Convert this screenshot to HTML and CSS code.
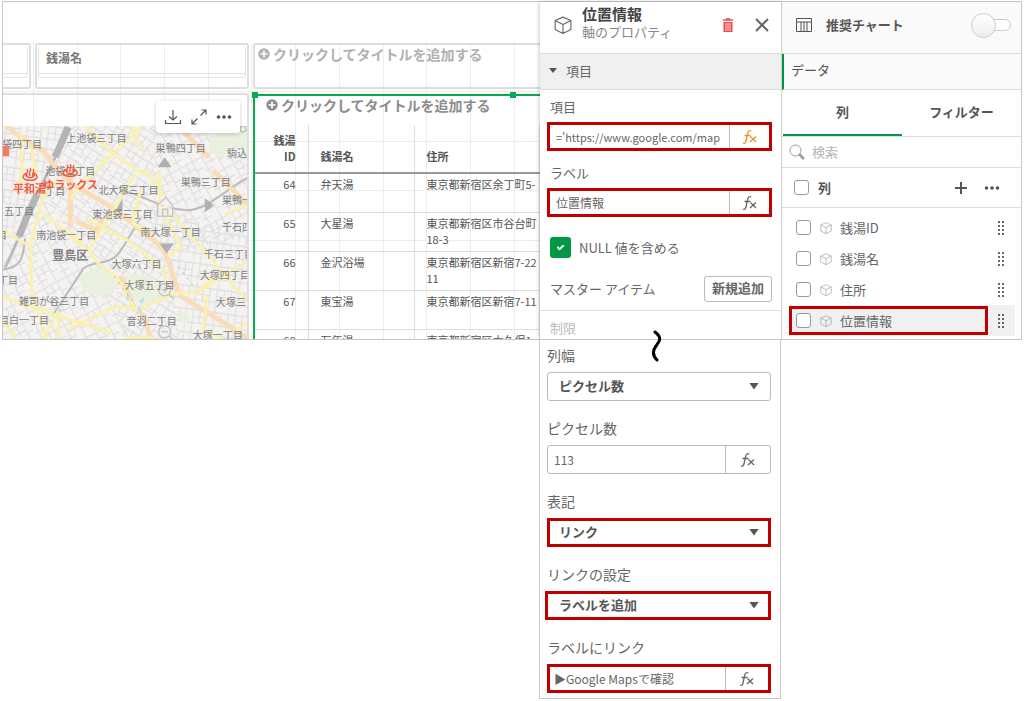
FILE: index.html
```html
<!DOCTYPE html>
<html lang="ja">
<head>
<meta charset="utf-8">
<meta name="viewport" content="width=device-width, initial-scale=1">
<title>位置情報 - 軸のプロパティ</title>
<link rel="stylesheet" href="styles.css">
</head>
<body>
<svg class="defs" aria-hidden="true">
  <symbol id="cube" viewBox="0 0 16 16"><path d="M8 1 15 4v8l-7 3.500L1 12V4zM1 4l7 3.500L15 4M8 7.500v8" fill="none" stroke="currentColor" stroke-linejoin="round"/></symbol>
  <symbol id="plus-disc" viewBox="0 0 12 12"><circle cx="6" cy="6" r="5.700" fill="currentColor"/><path d="M6 2.500v7M2.500 6h7" stroke="#fff" stroke-width="1.700"/></symbol>
  <symbol id="fx" viewBox="0 0 18 18"><path d="M2 15c2 1 2.700-.5 3.200-3L6.600 5.500C7.100 3 8.300 2 10.300 3M3.500 7.500h6M9.500 8.500l5.500 5.500M15 8.500l-6 5.500" fill="none" stroke="currentColor" stroke-width="1.300"/></symbol>
  <symbol id="grip" viewBox="0 0 8 16"><path d="M2 1v14M6 1v14" stroke="currentColor" stroke-width="2" stroke-dasharray="2 2"/></symbol>
  <symbol id="dots" viewBox="0 0 16 6"><g fill="currentColor"><circle cx="2.500" cy="3" r="1.800"/><circle cx="8" cy="3" r="1.800"/><circle cx="13.500" cy="3" r="1.800"/></g></symbol>
  <symbol id="onsen" viewBox="0 0 16 14"><path d="M4 6C2 12 14 12 12 6c6 4 2 7-4 7S-2 10 4 6M5 9C3 6 7 5 5 2M8 9c-2-4 2-5 0-8M11 9c-2-3 2-4 0-7" fill="none" stroke="#f4583c" stroke-width="1.400"/></symbol>
</svg>

<main class="frame">
  <section class="canvas" aria-label="シート">
    <svg class="gridlines" aria-hidden="true" width="537" height="337"><path d="M30.500 40v300M74.500 40v300M117.500 40v300M161.500 40v300M205.500 40v300M248.500 40v300M292.500 40v300M336.500 40v300M380.500 40v300M423.500 40v300M467.500 40v300M511.500 40v300M0 89.500h537M0 139.500h537M0 188.500h537M0 238.500h537M0 288.500h537" stroke="#ededed"/></svg>
    <div class="card card-edge"><div class="filter"></div></div>
    <div class="card"><div class="filter">銭湯名</div></div>
    <div class="card card-open"><button class="title-add" type="button"><svg class="i12"><use href="#plus-disc"/></svg>クリックしてタイトルを追加する</button></div>
    <div class="card map-card">
      <div class="toolbar">
        <button type="button" aria-label="ダウンロード"><svg class="i18" viewBox="0 0 18 18"><path d="M9 2v10M5 8.500 9 12l4-3.500M1.500 12v3.500h15V12" fill="none" stroke="currentColor" stroke-width="1.200"/></svg></button>
        <button type="button" aria-label="全画面"><svg class="i18" viewBox="0 0 18 18"><path d="M10.500 7.500 16 2M11.500 2H16v4.500M7.500 10.500 2 16M2 11.500V16h4.500" fill="none" stroke="currentColor" stroke-width="1.200"/></svg></button>
        <button type="button" aria-label="その他"><svg class="i16x6"><use href="#dots"/></svg></button>
      </div>
      <svg class="map" viewBox="3 126 243 213" preserveAspectRatio="xMinYMin slice" role="img" aria-label="豊島区の地図">
        <defs>
          <pattern id="s1" width="23" height="19" patternUnits="userSpaceOnUse" patternTransform="rotate(32)"><path d="M0 2h23M5 2v17M12 0v11M19 2v17M5 8h7M0 14h19M12 11h11" stroke="#dcdcdc" fill="none"/></pattern>
          <pattern id="s2" width="25" height="21" patternUnits="userSpaceOnUse" patternTransform="rotate(-28)"><path d="M0 2h25M4 2v19M11 2v10M18 0v21M4 9h14M0 16h11M18 12h7" stroke="#dcdcdc" fill="none"/></pattern>
          <pattern id="s3" width="21" height="23" patternUnits="userSpaceOnUse" patternTransform="rotate(8)"><path d="M0 3h21M3 0v23M10 3v13M17 3v20M3 10h14M0 16h21" stroke="#dcdcdc" fill="none"/></pattern>
        </defs>
        <path fill="#f4f3f2" d="M3 126h243v213H3z"/>
        <path fill="url(#s3)" d="M3 126h65L38 185 3 250z"/>
        <path fill="url(#s1)" d="M68 126h90l-10 80-60 45-50-60z"/>
        <path fill="url(#s2)" d="M158 126h88v110l-70 15-28-45z"/>
        <path fill="url(#s3)" d="M148 206l98 30v103h-65z"/>
        <path fill="url(#s2)" d="M3 250l35-59 50 60 40 80v8H3z"/>
        <path fill="url(#s1)" d="M88 251l60-45 33 133h-53z"/>
        <g fill="#e9f0de">
          <path d="M210 136l24-8 12 2v20l-18-4-6 14-14-10zM78 276l16-8 18 5 5 14-14 8-20-4zM120 277l21-4 16 8 9 14-25 8-16-8zM98 159l8-4 4 8-8 3zM46 308l8 1v7h-9zM180 310l10 5-5 8-10-4z"/>
        </g>
        <path d="M68 127l-13 30M37 194c-9 18-14 31-18 42" fill="none" stroke="#b4b4b4" stroke-width="7"/>
        <path d="M55 157l-18 37M19 236c-4 10-8 19-14 31" fill="none" stroke="#bbb" stroke-width="3"/>
        <path d="M3 269c17-2 20-9 22-31M53 314l30-46c11-9 24-2 35-15 7-10 14-22 22-36M120 190c26 5 36 18 67 20 22-2 36-20 59-32" fill="none" stroke="#bbb" stroke-width="2"/>
        <g fill="none" stroke="#fbdcb8" stroke-width="5"><path d="M3 122c20 22 42 24 48 40 10 8 12 18 26 25l38 22 38 31c20 14 15 37 28 56l42 26 26 17M212 170l34 34M70 170v57M76 221l20 9 6-13M120 275l13 31 11 10 6 23M177 126l31 31"/></g>
        <g fill="none" stroke="#faf1ae" stroke-width="3">
          <path d="M85 126l31 31 29 18M142 126l-40 38-33 35M131 126l9 24M21 133l1 44-5 6M31 147l5 28M3 230l27 16 12-47 14-19M31 246c-1 35 0 50 7 64l8 29M3 296l54 19 55 17M72 232l28 33 16 11 17 30M88 251l35-58 12-19M88 219l43 23 32 27M164 269l3 28M134 310l42-18h20l50-31M159 171v36l22 40-14 9M140 189l-8 34 22 12M164 205l43 50 39 45M195 293l17-16M43 339l15-29 1 29M67 329l47-23 24 2M205 293v20l-3 16 20 10M145 170l18 25M42 212l40 33M224 214l22-9M235 330l11-8M3 320l14 18M125 337h29"/>
        </g>
        <path d="M128 294l-1 6M143 298l-3 4M138 306l2 5M58 308l3 2" stroke="#b9e3f1" stroke-width="3"/>
        <path d="M114 276l18 25M178 266l15 20" stroke="#bbb" stroke-dasharray="2 5"/>
        <g fill="#b0b0b0"><path d="M164 157l7 10h-14zM115 211l7-13v13zM204 198l9 7-9 7zM159 243h14l-7 10z"/></g>
        <g fill="#f3f2f1" fill-opacity=".6" stroke="#c6c6c6" stroke-width="1.500"><circle cx="164" cy="289" r="6"/><path d="M161 289h6M164 286v6M168 294l5 4"/><circle cx="164" cy="331" r="6"/><path d="M161 331h6M168 335l5 4"/><path d="M157 205l8-8 7 8v11h-15zM162 216v-7h5v7"/><circle cx="242" cy="129" r="3"/></g>
        <g class="places">
          <text x="2" y="148">袋四丁目</text><text x="66" y="142">上池袋三丁目</text><text x="155" y="152">巣鴨四丁目</text><text x="226" y="157">駒込</text>
          <text x="45" y="175">池袋二丁目</text><text x="98" y="194">北大塚三丁目</text><text x="180" y="186">巣鴨三丁目</text><text x="221" y="204">巣鴨一</text>
          <text x="45" y="195">丁目</text><text x="4" y="215">五丁目</text><text x="92" y="218">東池袋三丁目</text><text x="221" y="231">千石四</text><text x="36" y="239">南池袋一丁目</text><text x="140" y="236">南大塚一丁目</text>
          <text x="-3" y="239">目</text><text x="111" y="267">大塚六丁目</text><text x="203" y="257">千石三丁目</text><text x="124" y="288">大塚五丁目</text><text x="199" y="278">大塚四丁目</text><text x="-2" y="283">丁目</text>
          <text x="19" y="304">雑司が谷三丁目</text><text x="215" y="305">大塚三</text><text x="-1" y="323">目白一丁目</text><text x="126" y="324">音羽二丁目</text><text x="192" y="338">大塚一丁目</text>
          <text class="ward" x="52" y="259">豊島区</text>
          <text class="bath" x="13" y="193">平和湯</text><text class="bath" x="43" y="189">ゆラックス</text>
        </g>
        <path d="M3 146h6v10H3z" fill="#f77a60"/>
        <use href="#onsen" x="22" y="167" width="16" height="14"/><use href="#onsen" x="62" y="163" width="16" height="14"/>
      </svg>
    </div>
    <div class="table-card">
      <i class="handle"></i><i class="handle handle-mid"></i>
      <button class="title-add title-active" type="button"><svg class="i12"><use href="#plus-disc"/></svg>クリックしてタイトルを追加する</button>
      <table class="baths">
        <thead><tr><th class="num">銭湯ID</th><th>銭湯名</th><th>住所</th></tr></thead>
        <tbody>
          <tr><td class="num">64</td><td>弁天湯</td><td>東京都新宿区余丁町5-</td></tr>
          <tr><td class="num">65</td><td>大星湯</td><td>東京都新宿区市谷台町<br>18-3</td></tr>
          <tr><td class="num">66</td><td>金沢浴場</td><td>東京都新宿区新宿7-22<br>11</td></tr>
          <tr><td class="num">67</td><td>東宝湯</td><td>東京都新宿区新宿7-11</td></tr>
          <tr><td class="num">68</td><td>万年湯</td><td>東京都新宿区大久保1-</td></tr>
        </tbody>
      </table>
    </div>
  </section>

  <section class="props" aria-label="軸のプロパティ">
    <header class="props-head">
      <svg class="i18"><use href="#cube"/></svg>
      <div class="heading"><h1>位置情報</h1><p>軸のプロパティ</p></div>
      <button class="delete" type="button" aria-label="削除"><svg class="trash" viewBox="0 0 10 14"><path d="M0 2h10M3 1h4" stroke="currentColor" stroke-width="1.500"/><path d="M.5 4h9v10h-9z" fill="currentColor"/><path d="M3 5v8M5 5v8M7 5v8" stroke="#fff" stroke-width=".8"/></svg></button>
      <button type="button" aria-label="閉じる"><svg class="i14" viewBox="0 0 14 14"><path d="M1 1l12 12M13 1 1 13" stroke="currentColor" stroke-width="2"/></svg></button>
    </header>
    <button class="section-toggle" type="button">項目</button>
    <div class="props-body">
      <label for="item">項目</label>
      <div class="expr marked"><input id="item" class="formula" value="='https://www.google.com/map"><button class="fx-orange" type="button" aria-label="式"><svg class="i18"><use href="#fx"/></svg></button></div>
      <label for="label">ラベル</label>
      <div class="expr marked"><input id="label" value="位置情報"><button type="button" aria-label="式"><svg class="i18"><use href="#fx"/></svg></button></div>
      <label class="null-row"><input type="checkbox" checked>NULL 値を含める</label>
      <div class="master"><span>マスター アイテム</span><button type="button">新規追加</button></div>
    </div>
    <div class="limit">制限</div>
  </section>

  <aside class="data" aria-label="データ">
    <label class="suggest"><svg class="i16" viewBox="0 0 16 14"><path d="M.5.5h15v13H.5zM.5 4h15M5 4v9.500M8 4v9.500M11 4v9.500" fill="none" stroke="currentColor"/></svg><span>推奨チャート</span><input type="checkbox" role="switch"></label>
    <h2>データ</h2>
    <nav class="tabs"><button class="active" type="button">列</button><button type="button">フィルター</button></nav>
    <label class="search"><svg class="i16" viewBox="0 0 16 16"><circle cx="6.500" cy="6.500" r="5.500" fill="none" stroke="currentColor"/><path d="M10 11l1-1 4 4-1 1z" fill="none" stroke="currentColor" stroke-width="1.300"/></svg><input type="search" placeholder="検索" aria-label="検索"></label>
    <div class="columns-head"><label><input type="checkbox">列</label><button type="button" aria-label="追加"><svg class="i12" viewBox="0 0 12 12"><path d="M6 0v12M0 6h12" stroke="currentColor" stroke-width="2"/></svg></button><button type="button" aria-label="その他"><svg class="i16x6"><use href="#dots"/></svg></button></div>
    <ul class="columns">
      <li><label><input type="checkbox"><svg class="i12"><use href="#cube"/></svg>銭湯ID</label><svg class="grip"><use href="#grip"/></svg></li>
      <li><label><input type="checkbox"><svg class="i12"><use href="#cube"/></svg>銭湯名</label><svg class="grip"><use href="#grip"/></svg></li>
      <li><label><input type="checkbox"><svg class="i12"><use href="#cube"/></svg>住所</label><svg class="grip"><use href="#grip"/></svg></li>
      <li class="selected"><label><input type="checkbox"><svg class="i12"><use href="#cube"/></svg>位置情報</label><svg class="grip"><use href="#grip"/></svg></li>
    </ul>
  </aside>
</main>

<section class="detail" aria-label="列の表示設定">
  <svg class="squiggle" viewBox="0 0 12 32" aria-hidden="true"><path d="M5 2c8 6 4 10 1 14s-4 9 1 14" fill="none" stroke="#000" stroke-width="3" stroke-linecap="round"/></svg>
  <div class="field"><label for="width">列幅</label><div class="select"><select id="width"><option>ピクセル数</option></select></div></div>
  <div class="field"><label for="px">ピクセル数</label><div class="expr"><input id="px" value="113"><button type="button" aria-label="式"><svg class="i18"><use href="#fx"/></svg></button></div></div>
  <div class="field"><label for="repr">表記</label><div class="select marked"><select id="repr"><option>リンク</option></select></div></div>
  <div class="field"><label for="link">リンクの設定</label><div class="select marked wide"><select id="link"><option>ラベルを追加</option></select></div></div>
  <div class="field"><label for="text">ラベルにリンク</label><div class="expr marked"><input id="text" value="▶Google Mapsで確認"><button type="button" aria-label="式"><svg class="i18"><use href="#fx"/></svg></button></div></div>
</section>
</body>
</html>
```

FILE: styles.css
```css
* { box-sizing: border-box; }
body {
  margin: 0;
  padding: 1px 2px 0;
  background: #fff;
  color: #666;
  font: 13px/20px "Noto Sans CJK JP", sans-serif;
}
button, input, select { font: inherit; color: inherit; margin: 0; }
button { border: 0; padding: 0; background: none; display: flex; align-items: center; justify-content: center; }
h1, h2, p, ul { margin: 0; padding: 0; list-style: none; }
svg { flex: none; display: block; }
.defs { position: absolute; width: 0; height: 0; }
.i12 { width: 12px; height: 12px; }
.i14 { width: 14px; height: 16px; }
.i16 { width: 16px; height: 16px; }
.i18 { width: 18px; height: 18px; }
.i16x6 { width: 16px; height: 6px; }
.trash { width: 10px; height: 14px; }

.frame { display: flex; border: 1px solid #c6c6c6; }

/* Sheet */
.canvas {
  position: relative;
  flex: 1;
  min-width: 0;
  contain: size;
  overflow: hidden;
  padding-top: 41px;
  display: grid;
  grid-template-columns: 28px 214px 1fr;
  grid-template-rows: 46px 1fr;
  gap: 4px;
}
.gridlines { position: absolute; top: 0; left: 0; }
.card { position: relative; border: 2px solid #dedede; border-radius: 3px; padding: 1px; min-width: 0; }
.card-edge { border-left: 0; padding-left: 0; border-radius: 0 3px 3px 0; }
.card-open { border-right: 0; border-radius: 3px 0 0 3px; padding: 0 3px; }
.filter {
  height: 32px;
  padding: 0 7px;
  border: 1px solid #e6e6e6;
  border-top: 0;
  border-radius: 3px;
  font-size: 12px;
  line-height: 24px;
  font-weight: 700;
  color: #777;
  background: linear-gradient(#e2e2e2, #e2e2e2) 0 27px / 100% 1px no-repeat;
}
.card-edge .filter { border-left: 0; }
.title-add { gap: 3px; font-size: 14px; line-height: 18px; color: #b0b0b0; white-space: nowrap; font-weight: 700; }
.title-active { color: #8c8c8c; padding-left: 11px; }

.map-card { grid-column: 1 / 3; border-left: 0; border-bottom: 0; padding: 31px 0 0; border-radius: 0 3px 0 0; min-height: 0; }
.map { width: 100%; height: 100%; }
.places { font-size: 10px; fill: #808080; }
.ward { font-size: 12px; font-weight: 700; }
.bath { font-size: 11px; font-weight: 700; fill: #f4583c; }
.toolbar {
  position: absolute;
  top: 6px;
  right: 7px;
  display: flex;
  align-items: center;
  gap: 8px;
  padding: 7px 8px;
  background: #fff;
  border-radius: 3px;
  box-shadow: 0 1px 4px #0003;
  color: #555;
}
.table-card {
  position: relative;
  border: solid #0aab4f;
  border-width: 2px 0 0 2px;
  margin-top: 1px;
  min-width: 0;
  min-height: 0;
}
.handle { position: absolute; left: -3px; top: -4px; width: 6px; height: 6px; background: #0aab4f; }
.handle-mid { left: 255px; }
.baths { table-layout: fixed; width: 100%; margin-top: 11px; border-collapse: collapse; font-size: 11px; line-height: 16px; color: #555; }
.baths th { height: 48px; padding: 0 12px 8px; vertical-align: bottom; text-align: left; font-weight: 700; border-bottom: 2px solid #999; border-right: 1px solid #ddd; }
.baths td { height: 39px; padding: 2px 12px 0; vertical-align: top; border-bottom: 1px solid #ddd; border-right: 1px solid #ddd; white-space: nowrap; }
.baths th:nth-child(1) { width: 53px; }
.baths th:nth-child(2) { width: 106px; }
.baths .num { text-align: right; padding-left: 16px; }

/* Properties */
.props { width: 241px; background: #fff; position: relative; box-shadow: -1px 0 4px #0003; overflow: hidden; }
.props-head { display: flex; align-items: center; height: 52px; padding: 0 12px 5px 14px; border-bottom: 1px solid #ddd; }
.heading { flex: 1; padding: 0 0 5px 10px; line-height: 17px; }
.heading h1 { font-size: 15px; line-height: 18px; color: #444; }
.heading p { color: #888; }
.delete { color: #f04848; margin-right: 22px; }
.section-toggle { width: 100%; height: 36px; justify-content: flex-start; gap: 9px; padding: 0 0 2px 9px; background: #f0f0f0; border-bottom: 1px solid #ddd; }
.section-toggle::before { content: ""; width: 8px; height: 5px; background: #555; clip-path: polygon(0 0, 100% 0, 50% 100%); }
.props-body { padding: 7px 9px 8px 7px; }
.props-body > label { display: block; padding-left: 3px; margin-bottom: 5px; }
.expr, .select { display: flex; height: 29px; border: 1px solid #bbb; border-radius: 3px; background: #fff; }
.marked { border: 3px solid #c00000; border-radius: 0; }
.expr { margin-bottom: 12px; }
.expr input { flex: 1; min-width: 0; border: 0; padding: 0 6px; outline: 0; background: none; font-size: 12px; }
.expr .formula { font-size: 11px; }
.expr button { width: 40px; border-left: 1px solid #bbb; }
.expr .fx-orange { color: #f0932b; }
.props-body .null-row { display: flex; align-items: center; gap: 8px; margin: 20px 0 18px; }
input[type="checkbox"] { appearance: none; flex: none; width: 15px; height: 15px; border: 1px solid #999; border-radius: 3px; background: #fff; }
.null-row input[type="checkbox"] { display: grid; place-items: center; width: 21px; height: 21px; border: 0; background: #009845; }
.null-row input::after { content: ""; width: 8px; height: 6px; background: #fff; clip-path: polygon(0 50%, 18% 27%, 38% 55%, 82% 0, 100% 22%, 40% 100%); }
.master { display: flex; justify-content: space-between; align-items: center; padding-left: 3px; }
.master button { height: 26px; padding: 0 7px 2px; border: 1px solid #bbb; border-radius: 3px; font-weight: 700; }
.limit { height: 29px; padding: 7px 10px 0; border-top: 1px solid #ddd; color: #bbb; }

/* Data panel */
.data { width: 240px; border-left: 1px solid #ddd; color: #555; }
.suggest { display: flex; align-items: center; height: 52px; padding: 0 10px 5px 14px; background: #fafafa; border-bottom: 1px solid #ddd; font-weight: 700; }
.suggest span { flex: 1; padding-left: 14px; }
.suggest input[type="checkbox"] { position: relative; width: 39px; height: 12px; border-color: #ccc; border-radius: 6px; }
.suggest input::after { content: ""; position: absolute; left: -2px; top: -7px; width: 23px; height: 23px; border: 1px solid #ccc; border-radius: 50%; background: linear-gradient(#fff, #eee); }
.data h2 { height: 36px; padding: 0 7px; font-size: 13px; line-height: 32px; font-weight: 400; background: #fafafa; border-left: 2px solid #009845; border-bottom: 1px solid #ddd; }
.tabs { display: grid; grid-template-columns: 1fr 1fr; height: 47px; padding-left: 1px; border-bottom: 1px solid #ddd; }
.tabs button { font-weight: 700; border-bottom: 2px solid transparent; }
.tabs .active { border-color: #009845; }
.search { display: flex; align-items: center; gap: 7px; height: 31px; padding-left: 7px; border-bottom: 1px solid #ddd; color: #999; }
.search input { flex: 1; min-width: 0; border: 0; padding: 0; outline: 0; }
.search input::placeholder { color: #b5b5b5; }
.columns-head { display: flex; align-items: center; gap: 17px; height: 40px; padding: 0 21px 0 12px; border-bottom: 1px solid #ddd; font-weight: 700; }
.columns-head label { flex: 1; display: flex; align-items: center; gap: 9px; }
.columns { padding: 4px 6px 1px 7px; }
.columns li { display: flex; align-items: center; justify-content: space-between; height: 31px; padding-right: 10px; color: #666; }
.columns label { display: flex; align-items: center; gap: 8px; width: 199px; height: 29px; padding-left: 7px; }
.columns label svg { color: #aaa; margin-left: 1px; }
.columns .grip { width: 8px; height: 16px; }
.columns .selected { background: #f0f0f0; }
.selected label { border: 3px solid #c00000; padding-left: 4px; }

/* Column display settings */
.detail { position: relative; width: 242px; margin: -1px 241px 0 auto; padding: 5px 9px 5px 7px; border: 1px solid #c6c6c6; display: grid; gap: 17px; background: #fff; }
.squiggle { position: absolute; left: 110px; top: -10px; width: 12px; height: 32px; }
.detail .field { display: grid; gap: 7px; }
.detail label { font-size: 14px; }
.detail .expr { margin: 0; }
.detail .expr button { width: 45px; }
.detail .expr.marked button { width: 43px; }
.detail .expr.marked input { padding: 0 4px; }
.select { position: relative; }
.select select { flex: 1; appearance: none; border: 0; padding: 0 11px 2px; background: none; font-weight: 700; color: #555; outline: 0; }
.select.marked select { padding: 0 9px 2px; }
.select::after { content: ""; position: absolute; right: 11px; top: 50%; width: 10px; height: 7px; margin-top: -4px; background: #555; clip-path: polygon(0 0, 100% 0, 50% 100%); pointer-events: none; }
.select.marked::after { right: 9px; }
.detail .wide { margin-left: -2px; }
.select.wide select { padding-left: 11px; }
```
